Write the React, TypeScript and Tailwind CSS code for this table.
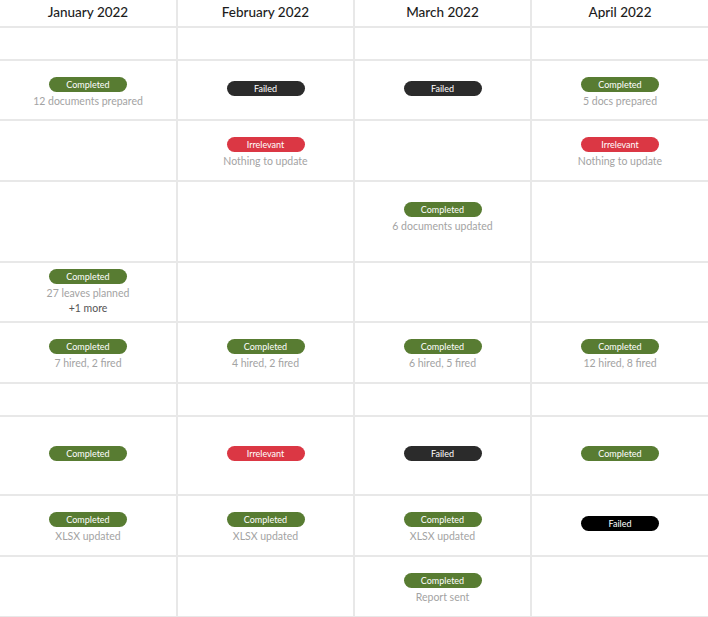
import React from "react";

type Status = "completed" | "failed" | "failedBlack" | "irrelevant";
type Cell = { status: Status; note?: string; more?: string; up?: boolean } | null;

const badgeClass: Record<Status, string> = {
  completed: "bg-[#587c32]",
  failed: "bg-[#2b2b2b]",
  failedBlack: "bg-black",
  irrelevant: "bg-[#db3744]",
};
const badgeLabel: Record<Status, string> = {
  completed: "Completed",
  failed: "Failed",
  failedBlack: "Failed",
  irrelevant: "Irrelevant",
};

const months = ["January 2022", "February 2022", "March 2022", "April 2022"];

const rows: { h: string; cells: Cell[] }[] = [
  { h: "h-[33px]", cells: [null, null, null, null] },
  {
    h: "h-[60px]",
    cells: [
      { status: "completed", note: "12 documents prepared" },
      { status: "failed" },
      { status: "failed" },
      { status: "completed", note: "5 docs prepared" },
    ],
  },
  {
    h: "h-[61px]",
    cells: [
      null,
      { status: "irrelevant", note: "Nothing to update" },
      null,
      { status: "irrelevant", note: "Nothing to update" },
    ],
  },
  {
    h: "h-[81px]",
    cells: [null, null, { status: "completed", note: "6 documents updated", up: true }, null],
  },
  {
    h: "h-[60px]",
    cells: [
      { status: "completed", note: "27 leaves planned", more: "+1 more" },
      null,
      null,
      null,
    ],
  },
  {
    h: "h-[61px]",
    cells: [
      { status: "completed", note: "7 hired, 2 fired" },
      { status: "completed", note: "4 hired, 2 fired" },
      { status: "completed", note: "6 hired, 5 fired" },
      { status: "completed", note: "12 hired, 8 fired" },
    ],
  },
  { h: "h-[33px]", cells: [null, null, null, null] },
  {
    h: "h-[79px]",
    cells: [
      { status: "completed" },
      { status: "irrelevant" },
      { status: "failed" },
      { status: "completed" },
    ],
  },
  {
    h: "h-[61px]",
    cells: [
      { status: "completed", note: "XLSX updated" },
      { status: "completed", note: "XLSX updated" },
      { status: "completed", note: "XLSX updated" },
      { status: "failedBlack" },
    ],
  },
  {
    h: "h-[61px]",
    cells: [null, null, { status: "completed", note: "Report sent" }, null],
  },
];

function CellView({ cell, last }: { cell: Cell; last: boolean }) {
  let pad = "";
  if (cell) {
    if (cell.up) pad = "pb-[8px]";
    else if (cell.more) pad = "";
    else if (cell.note) pad = "pt-[4px]";
    else pad = "pb-[4px]";
  }
  return (
    <div
      className={
        "flex flex-col items-center justify-center " +
        pad +
        " " +
        (last ? "" : "border-r-2 border-[#e8e8e8]")
      }
    >
      {cell && (
        <>
          <div
            className={
              "w-[78px] h-[15px] rounded-full flex items-center justify-center text-white text-[9px] leading-none " +
              badgeClass[cell.status]
            }
          >
            {badgeLabel[cell.status]}
          </div>
          {cell.note && (
            <div className="mt-[2px] text-[10.5px] leading-[14px] text-[#a3a3a3]">
              {cell.note}
            </div>
          )}
          {cell.more && (
            <div className="mt-[1px] text-[10.5px] leading-[14px] text-[#555555]">
              {cell.more}
            </div>
          )}
        </>
      )}
    </div>
  );
}

export default function App() {
  return (
    <div
      className="w-[708px] bg-white"
      style={{ fontFamily: "Lato, 'Open Sans', sans-serif" }}
    >
      <div className="grid grid-cols-[178px_177px_177px_176px] h-[28px] border-b-2 border-[#e8e8e8]">
        {months.map((m, i) => (
          <div
            key={m}
            className={
              "flex items-center justify-center text-[13.5px] font-medium text-[#1c1c1c] pb-[2px] " +
              (i < 3 ? "border-r-2 border-[#e8e8e8]" : "")
            }
          >
            {m}
          </div>
        ))}
      </div>
      {rows.map((r, ri) => (
        <div
          key={ri}
          className={"grid grid-cols-[178px_177px_177px_176px] border-b-2 border-[#e8e8e8] " + r.h}
        >
          {r.cells.map((c, ci) => (
            <CellView key={ci} cell={c} last={ci === 3} />
          ))}
        </div>
      ))}
    </div>
  );
}
